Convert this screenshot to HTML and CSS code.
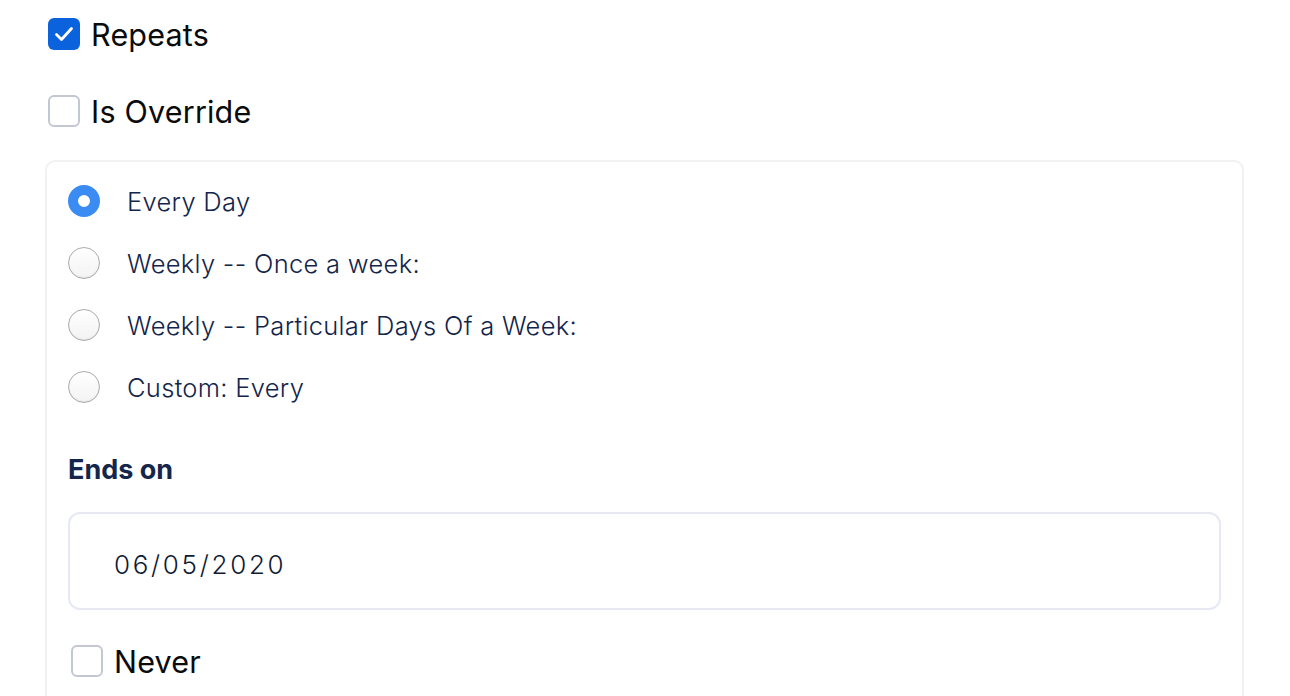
FILE: index.html
```html
<!DOCTYPE html>
<html lang="en">

<head>
    <meta charset="UTF-8">
    <meta name="viewport" content="width=device-width, initial-scale=1.0">
    <title>Repeat settings</title>
    <link rel="stylesheet" href="styles.css">
</head>

<body>
    <div class="page">
        <label class="check-row">
            <span class="box checked">
                <svg viewBox="0 0 32 32" width="32" height="32">
                    <path d="M8.5 16.5 L13.5 21.5 L23.5 10.5" fill="none" stroke="#fff" stroke-width="2.8" stroke-linecap="round" stroke-linejoin="round" />
                </svg>
            </span>
            <span class="check-text">Repeats</span>
        </label>

        <label class="check-row">
            <span class="box"></span>
            <span class="check-text">Is Override</span>
        </label>

        <div class="card">
            <div class="radio-list">
                <label class="radio-row">
                    <span class="radio on"></span>
                    <span class="radio-text">Every Day</span>
                </label>
                <label class="radio-row">
                    <span class="radio"></span>
                    <span class="radio-text">Weekly -- Once a week:</span>
                </label>
                <label class="radio-row">
                    <span class="radio"></span>
                    <span class="radio-text">Weekly -- Particular Days Of a Week:</span>
                </label>
                <label class="radio-row">
                    <span class="radio"></span>
                    <span class="radio-text">Custom: Every</span>
                </label>
            </div>

            <h4 class="ends-title">Ends on</h4>
            <div class="date-input">06/05/2020</div>

            <label class="check-row never">
                <span class="box"></span>
                <span class="check-text">Never</span>
            </label>
        </div>
    </div>
</body>

</html>
```

FILE: styles.css
```css
* {
    box-sizing: border-box;
}

body {
    margin: 0;
    background-color: #fff;
    font-family: Inter, "Noto Sans", sans-serif;
    overflow: hidden;
}

.page {
    padding: 18px 0 0 45px;
    width: 1244px;
}

.check-row {
    display: flex;
    align-items: center;
    gap: 11px;
    height: 32px;
    margin-left: 3px;
    margin-bottom: 45px;
}

.box {
    width: 32px;
    height: 32px;
    border: 2px solid #c3c7d3;
    border-radius: 6px;
    background-color: #fff;
    flex-shrink: 0;
}

.box.checked {
    border: none;
    background-color: #0a63dc;
}

.box svg {
    display: block;
}

.check-text {
    font-size: 30.5px;
    color: #0b0b0b;
    letter-spacing: 0.2px;
}

.card {
    border: 2px solid #f1f1f1;
    border-bottom: none;
    border-radius: 10px 10px 0 0;
    padding: 23px 21px 40px 21px;
    margin-top: -12px;
}

.radio-list {
    display: flex;
    flex-direction: column;
    gap: 30px;
}

.radio-row {
    display: flex;
    align-items: center;
    gap: 27px;
    height: 32px;
}

.radio {
    width: 32px;
    height: 32px;
    border-radius: 50%;
    border: 1.5px solid #ababab;
    background: linear-gradient(#fff, #f3f3f3);
    box-shadow: inset 0 -1px 1px rgba(0, 0, 0, 0.06);
    flex-shrink: 0;
}

.radio.on {
    border: 10px solid #3a8cf3;
    background: #fff;
    box-shadow: none;
}

.radio-text {
    font-size: 25.5px;
    font-weight: 300;
    color: #13254a;
    letter-spacing: 0.3px;
}

.ends-title {
    margin: 52px 0 27px 0;
    font-size: 27px;
    font-weight: 700;
    color: #14264b;
    line-height: 30px;
}

.date-input {
    height: 98px;
    border: 2px solid #e6e9f4;
    border-radius: 12px;
    display: flex;
    align-items: center;
    padding: 6px 0 0 44px;
    font-size: 26px;
    font-weight: 300;
    letter-spacing: 2.7px;
    color: #0f1a33;
}

.never {
    margin-top: 35px;
    margin-left: 3px;
    gap: 11px;
}
```
